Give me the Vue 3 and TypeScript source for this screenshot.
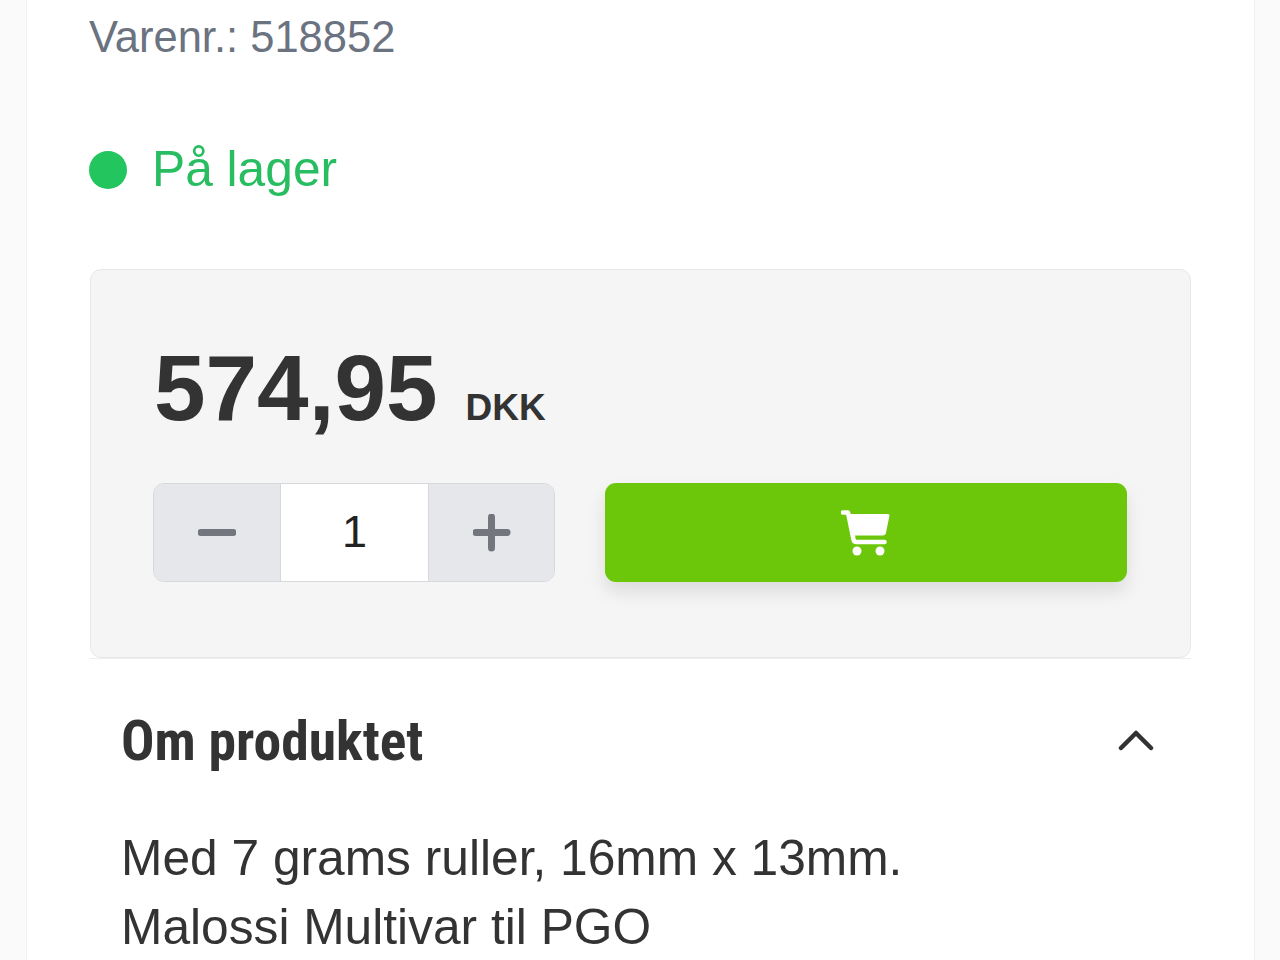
<template>
  <div class="page">
    <main class="product">
      <p class="sku">Varenr.: 518852</p>

      <div class="stock">
        <span class="stock-dot" />
        <span>På lager</span>
      </div>

      <section class="buy-box">
        <div class="price">
          <strong>574,95</strong>
          <span>DKK</span>
        </div>
        <div class="buy-row">
          <div class="stepper">
            <button type="button" aria-label="Færre">
              <svg viewBox="0 0 38 38" width="38" height="38">
                <path d="M3 18.500h32" />
              </svg>
            </button>
            <div class="qty">{{ quantity }}</div>
            <button type="button" aria-label="Flere">
              <svg viewBox="0 0 38 38" width="38" height="38">
                <path d="M3 18.500h31M18.500 3v31" />
              </svg>
            </button>
          </div>
          <button type="button" class="add-to-cart" aria-label="Læg i kurv">
            <svg viewBox="0 0 50 46" width="50" height="46">
              <path class="cart-fill" d="M8 4h39c1 0 1.600.8 1.400 1.800l-3.400 17c-.4 1.700-1.600 2.700-3.200 2.700H13z" />
              <path class="cart-line" d="M2 2.500h5l5.500 27c.3 1.500 1.300 2.500 3 2.500h28" />
              <circle cx="16" cy="41" r="4.500" />
              <circle cx="39" cy="41" r="4.500" />
            </svg>
          </button>
        </div>
      </section>

      <section class="about">
        <header>
          <h2>Om produktet</h2>
          <svg viewBox="0 0 36 22" width="36" height="22">
            <path d="M3 18 18 3l15 15" />
          </svg>
        </header>
        <p v-for="line in description" :key="line">{{ line }}</p>
      </section>
    </main>
  </div>
</template>

<script setup lang="ts">
const quantity = 1

const description = [
  'Med 7 grams ruller, 16mm x 13mm.',
  'Malossi Multivar til PGO'
]
</script>

<style>
html,
body {
  margin: 0;
  background: #fafafa;
}
</style>

<style scoped>
.page {
  height: 960px;
  overflow: hidden;
  padding: 0 25px 0 26px;
  font-family: "Liberation Sans", Arial, sans-serif;
  color: #333;
}

.product {
  height: 960px;
  box-sizing: border-box;
  padding: 12px 63px 0;
  background: #fff;
  border-left: 1px solid #f1f1f1;
  border-right: 1px solid #f1f1f1;
}

.sku {
  margin: 0 0 0 -1px;
  font-size: 43.5px;
  line-height: 50px;
  color: #6b7280;
}

.stock {
  display: flex;
  align-items: center;
  gap: 25px;
  margin: 76px 0 0 -1px;
  font-size: 49.7px;
  line-height: 63px;
  color: #28bd60;
}

.stock-dot {
  width: 38px;
  height: 38px;
  margin-top: 1px;
  border-radius: 50%;
  background: #22c55e;
}

.buy-box {
  margin-top: 68px;
  height: 389px;
  box-sizing: border-box;
  padding: 65px 63px 0 62px;
  background: #f5f5f5;
  border: 1px solid #e8e8e8;
  border-radius: 11px;
}

.price {
  display: flex;
  align-items: baseline;
  gap: 28px;
  height: 148px;
  padding-left: 1px;
  line-height: 106px;
}

.price strong {
  font-size: 92.7px;
  font-weight: 700;
}

.price span {
  font-size: 37px;
  font-weight: 700;
}

.buy-row {
  display: flex;
  gap: 50px;
  height: 99px;
}

.stepper {
  display: grid;
  grid-template-columns: 126px 149px 125px;
  box-sizing: border-box;
  width: 402px;
  border: 1px solid #d6d8dc;
  border-radius: 11px;
  overflow: hidden;
}

.stepper button {
  display: flex;
  align-items: center;
  justify-content: center;
  padding: 0;
  border: 0;
  background: #e5e7eb;
}

.stepper svg path {
  fill: none;
  stroke: #73777d;
  stroke-width: 7;
  stroke-linecap: round;
}

.qty {
  display: flex;
  align-items: center;
  justify-content: center;
  padding-bottom: 2px;
  background: #fff;
  border-left: 1px solid #d6d8dc;
  border-right: 1px solid #d6d8dc;
  font-size: 45px;
  color: #222;
}

.add-to-cart {
  flex: 1;
  display: flex;
  align-items: center;
  justify-content: center;
  padding: 0;
  border: 0;
  border-radius: 11px;
  background: #6cc70a;
  box-shadow: 0 10px 18px rgba(0, 0, 0, 0.1);
}

.add-to-cart svg {
  fill: #fff;
}

.cart-line {
  fill: none;
  stroke: #fff;
  stroke-width: 4.500;
  stroke-linecap: round;
  stroke-linejoin: round;
}

.about {
  padding: 0 31px;
  border-top: 1px solid #eee;
}

.about header {
  display: flex;
  align-items: center;
  justify-content: space-between;
  height: 165px;
  padding-bottom: 1px;
  box-sizing: border-box;
}

.about h2 {
  margin: 0;
  font-family: Roboto, "Liberation Sans", sans-serif;
  font-stretch: 75%;
  font-size: 55.6px;
  font-weight: 700;
  color: #333;
}

.about header svg {
  margin-right: 6px;
}

.about header path {
  fill: none;
  stroke: #333;
  stroke-width: 4.500;
  stroke-linecap: round;
  stroke-linejoin: round;
}

.about p {
  margin: 0;
  font-size: 49.7px;
  line-height: 69px;
  color: #333;
}
</style>
